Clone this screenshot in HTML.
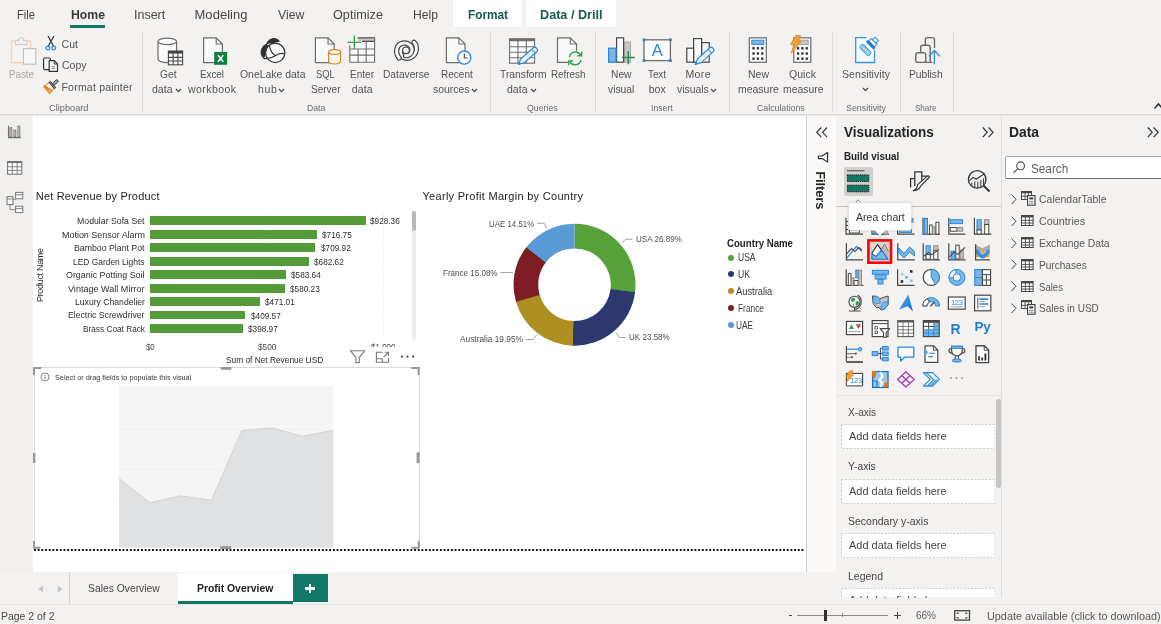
<!DOCTYPE html>
<html lang="en"><head><meta charset="utf-8"><title>Power BI Desktop</title>
<style>
html,body{margin:0;padding:0;}
body{background:#f3f2f1;width:1161px;height:624px;overflow:hidden;font-family:"Liberation Sans",sans-serif;}
#app{will-change:transform;position:relative;width:1161px;height:624px;overflow:hidden;background:#f3f2f1;}
#app>div,#app>span,#app>svg{position:absolute;}
.t{white-space:nowrap;line-height:1;display:block;}
svg{overflow:visible;}
.m{display:inline-block;width:0;height:0;}

</style></head>
<body>
<div id="app">
<div style="left:453px;top:0px;width:68.75px;height:27px;background:#fff;"></div>
<div style="left:525.75px;top:0px;width:90.5px;height:27px;background:#fff;"></div>
<div style="left:0px;top:114px;width:1161px;height:1px;background:#dddbd9;"></div>
<div style="left:0px;top:115px;width:1161px;height:1px;background:#e9e8e6;"></div>
<div style="left:0px;top:116px;width:32.5px;height:456px;background:#f1f0ef;"></div>
<div style="left:32.5px;top:116px;width:773.5px;height:456px;background:#fff;"></div>
<div style="left:806px;top:116px;width:1px;height:456px;background:#d2d0ce;"></div>
<div style="left:807px;top:116px;width:29px;height:456px;background:#faf9f8;"></div>
<div style="left:836px;top:116px;width:165.5px;height:482px;background:#f3f2f1;"></div>
<div style="left:1001px;top:116px;width:1px;height:482px;background:#e1dfdd;"></div>
<div style="left:0px;top:572px;width:836px;height:32px;background:#f3f2f1;"></div>
<div style="left:0px;top:604px;width:1161px;height:1px;background:#e6e4e2;"></div>
<span class="t" style="left:17.00px;top:8.25px;font-size:13px;color:#484644;transform:scaleX(0.8591);transform-origin:0 0;">File</span>
<span class="t" style="left:133.75px;top:8.25px;font-size:13px;color:#484644;transform:scaleX(0.9611);transform-origin:0 0;">Insert</span>
<span class="t" style="left:194.50px;top:8.25px;font-size:13px;color:#484644;letter-spacing:0.033px;">Modeling</span>
<span class="t" style="left:277.50px;top:8.25px;font-size:13px;color:#484644;transform:scaleX(0.9391);transform-origin:0 0;">View</span>
<span class="t" style="left:333.00px;top:8.25px;font-size:13px;color:#484644;transform:scaleX(0.9747);transform-origin:0 0;">Optimize</span>
<span class="t" style="left:413.00px;top:8.25px;font-size:13px;color:#484644;transform:scaleX(0.9346);transform-origin:0 0;">Help</span>
<span class="t" style="left:70.50px;top:8.25px;font-size:13px;color:#3b3a39;font-weight:700;transform:scaleX(0.9412);transform-origin:0 0;">Home</span>
<div style="left:70px;top:24.5px;width:35px;height:3px;background:#117865;"></div>
<span class="t" style="left:467.50px;top:8.25px;font-size:13px;color:#155a4e;font-weight:700;transform:scaleX(0.9078);transform-origin:0 0;">Format</span>
<span class="t" style="left:540.00px;top:8.25px;font-size:13px;color:#155a4e;font-weight:700;transform:scaleX(0.9721);transform-origin:0 0;">Data / Drill</span>
<div style="left:141.5px;top:32px;width:1px;height:80px;background:#dcdad8;"></div>
<div style="left:489.5px;top:32px;width:1px;height:80px;background:#dcdad8;"></div>
<div style="left:594.5px;top:32px;width:1px;height:80px;background:#dcdad8;"></div>
<div style="left:728.5px;top:32px;width:1px;height:80px;background:#dcdad8;"></div>
<div style="left:832px;top:32px;width:1px;height:80px;background:#dcdad8;"></div>
<div style="left:899.5px;top:32px;width:1px;height:80px;background:#dcdad8;"></div>
<div style="left:952.5px;top:32px;width:1px;height:80px;background:#dcdad8;"></div>
<span class="t" style="left:9.00px;top:69.25px;font-size:10.5px;color:#a9a7a5;transform:scaleX(0.9308);transform-origin:0 0;">Paste</span>
<span class="t" style="left:61.50px;top:39.25px;font-size:10.5px;color:#555352;letter-spacing:0.078px;">Cut</span>
<span class="t" style="left:61.50px;top:60.25px;font-size:10.5px;color:#555352;transform:scaleX(0.9994);transform-origin:0 0;">Copy</span>
<span class="t" style="left:61.50px;top:82.25px;font-size:10.5px;color:#555352;letter-spacing:0.209px;">Format painter</span>
<span class="t" style="left:159.50px;top:69.25px;font-size:10.5px;color:#555352;transform:scaleX(0.9742);transform-origin:0 0;">Get</span>
<span class="t" style="left:152.00px;top:84.25px;font-size:10.5px;color:#555352;letter-spacing:0.021px;">data</span>
<span class="t" style="left:200.00px;top:69.25px;font-size:10.5px;color:#555352;transform:scaleX(0.9343);transform-origin:0 0;">Excel</span>
<span class="t" style="left:188.00px;top:84.25px;font-size:10.5px;color:#555352;letter-spacing:0.435px;">workbook</span>
<span class="t" style="left:239.50px;top:69.25px;font-size:10.5px;color:#555352;transform:scaleX(0.9929);transform-origin:0 0;">OneLake data</span>
<span class="t" style="left:258.00px;top:84.25px;font-size:10.5px;color:#555352;letter-spacing:0.609px;">hub</span>
<span class="t" style="left:315.75px;top:69.25px;font-size:10.5px;color:#555352;transform:scaleX(0.8922);transform-origin:0 0;">SQL</span>
<span class="t" style="left:310.50px;top:84.25px;font-size:10.5px;color:#555352;transform:scaleX(0.9535);transform-origin:0 0;">Server</span>
<span class="t" style="left:350.00px;top:69.25px;font-size:10.5px;color:#555352;transform:scaleX(0.9558);transform-origin:0 0;">Enter</span>
<span class="t" style="left:351.75px;top:84.25px;font-size:10.5px;color:#555352;letter-spacing:0.104px;">data</span>
<span class="t" style="left:382.50px;top:69.25px;font-size:10.5px;color:#555352;transform:scaleX(0.9716);transform-origin:0 0;">Dataverse</span>
<span class="t" style="left:440.75px;top:69.25px;font-size:10.5px;color:#555352;transform:scaleX(0.9540);transform-origin:0 0;">Recent</span>
<span class="t" style="left:433.00px;top:84.25px;font-size:10.5px;color:#555352;transform:scaleX(0.9928);transform-origin:0 0;">sources</span>
<span class="t" style="left:499.50px;top:69.25px;font-size:10.5px;color:#555352;transform:scaleX(0.9799);transform-origin:0 0;">Transform</span>
<span class="t" style="left:507.00px;top:84.25px;font-size:10.5px;color:#555352;letter-spacing:0.021px;">data</span>
<span class="t" style="left:550.50px;top:69.25px;font-size:10.5px;color:#555352;transform:scaleX(0.9384);transform-origin:0 0;">Refresh</span>
<span class="t" style="left:610.50px;top:69.25px;font-size:10.5px;color:#555352;transform:scaleX(0.9755);transform-origin:0 0;">New</span>
<span class="t" style="left:607.50px;top:84.25px;font-size:10.5px;color:#555352;transform:scaleX(0.9773);transform-origin:0 0;">visual</span>
<span class="t" style="left:648.00px;top:69.25px;font-size:10.5px;color:#555352;transform:scaleX(0.9343);transform-origin:0 0;">Text</span>
<span class="t" style="left:648.75px;top:84.25px;font-size:10.5px;color:#555352;letter-spacing:0.031px;">box</span>
<span class="t" style="left:685.50px;top:69.25px;font-size:10.5px;color:#555352;letter-spacing:0.354px;">More</span>
<span class="t" style="left:677.00px;top:84.25px;font-size:10.5px;color:#555352;transform:scaleX(0.9888);transform-origin:0 0;">visuals</span>
<span class="t" style="left:748.00px;top:69.25px;font-size:10.5px;color:#555352;transform:scaleX(0.9993);transform-origin:0 0;">New</span>
<span class="t" style="left:738.00px;top:84.25px;font-size:10.5px;color:#555352;transform:scaleX(0.9973);transform-origin:0 0;">measure</span>
<span class="t" style="left:789.00px;top:69.25px;font-size:10.5px;color:#555352;letter-spacing:0.039px;">Quick</span>
<span class="t" style="left:782.50px;top:84.25px;font-size:10.5px;color:#555352;transform:scaleX(0.9912);transform-origin:0 0;">measure</span>
<span class="t" style="left:842.00px;top:69.25px;font-size:10.5px;color:#555352;letter-spacing:0.073px;">Sensitivity</span>
<span class="t" style="left:908.75px;top:69.25px;font-size:10.5px;color:#555352;transform:scaleX(0.9796);transform-origin:0 0;">Publish</span>
<svg style="left:175.75px;top:89px" width="5" height="3.6"><polyline points="0,0 2.5,2.6 5,0" fill="none" stroke="#4a4846" stroke-width="1.2"/></svg>
<svg style="left:278.5px;top:89px" width="5" height="3.6"><polyline points="0,0 2.5,2.6 5,0" fill="none" stroke="#4a4846" stroke-width="1.2"/></svg>
<svg style="left:472.2px;top:89px" width="5" height="3.6"><polyline points="0,0 2.5,2.6 5,0" fill="none" stroke="#4a4846" stroke-width="1.2"/></svg>
<svg style="left:530.75px;top:89px" width="5" height="3.6"><polyline points="0,0 2.5,2.6 5,0" fill="none" stroke="#4a4846" stroke-width="1.2"/></svg>
<svg style="left:711.25px;top:89px" width="5" height="3.6"><polyline points="0,0 2.5,2.6 5,0" fill="none" stroke="#4a4846" stroke-width="1.2"/></svg>
<svg style="left:862.7px;top:88px" width="5" height="3.6"><polyline points="0,0 2.5,2.6 5,0" fill="none" stroke="#4a4846" stroke-width="1.2"/></svg>
<span class="t" style="left:49.00px;top:103.25px;font-size:9.8px;color:#6b6968;transform:scaleX(0.9419);transform-origin:0 0;">Clipboard</span>
<span class="t" style="left:306.75px;top:103.25px;font-size:9.8px;color:#6b6968;transform:scaleX(0.8815);transform-origin:0 0;">Data</span>
<span class="t" style="left:526.75px;top:103.25px;font-size:9.8px;color:#6b6968;transform:scaleX(0.8962);transform-origin:0 0;">Queries</span>
<span class="t" style="left:650.75px;top:103.25px;font-size:9.8px;color:#6b6968;transform:scaleX(0.8872);transform-origin:0 0;">Insert</span>
<span class="t" style="left:756.75px;top:103.25px;font-size:9.8px;color:#6b6968;transform:scaleX(0.8946);transform-origin:0 0;">Calculations</span>
<span class="t" style="left:845.75px;top:103.25px;font-size:9.8px;color:#6b6968;transform:scaleX(0.9068);transform-origin:0 0;">Sensitivity</span>
<span class="t" style="left:914.50px;top:103.25px;font-size:9.8px;color:#6b6968;transform:scaleX(0.8220);transform-origin:0 0;">Share</span>
<svg style="left:1153.5px;top:103px" width="8" height="7"><polyline points="0.5,5.5 4.5,1 8.5,5.5" fill="none" stroke="#323130" stroke-width="1.5"/></svg>
<span class="t" style="left:35.75px;top:191.25px;font-size:11px;color:#252423;letter-spacing:0.185px;">Net Revenue by Product</span>
<svg style="left:0;top:0" width="1161" height="624"><line x1="266.6" y1="212" x2="266.6" y2="340" stroke="#ececec" stroke-width="1" stroke-dasharray="1,2"/><line x1="383.3" y1="212" x2="383.3" y2="340" stroke="#e4e4e4" stroke-width="1" stroke-dasharray="1,2"/></svg>
<div style="left:150px;top:216.3px;width:216.22px;height:8.9px;background:#539a39;"></div>
<span class="t" style="left:77.00px;top:217.25px;font-size:9px;color:#2f2e2d;transform:scaleX(0.9706);transform-origin:0 0;">Modular Sofa Set</span>
<span class="t" style="left:369.52px;top:217.25px;font-size:9px;color:#2f2e2d;transform:scaleX(0.9141);transform-origin:0 0;">$928.36</span>
<div style="left:150px;top:229.77px;width:166.93px;height:8.9px;background:#539a39;"></div>
<span class="t" style="left:61.50px;top:231.25px;font-size:9px;color:#2f2e2d;transform:scaleX(0.9935);transform-origin:0 0;">Motion Sensor Alarm</span>
<span class="t" style="left:322.23px;top:231.25px;font-size:9px;color:#2f2e2d;transform:scaleX(0.9141);transform-origin:0 0;">$716.75</span>
<div style="left:150px;top:243.24px;width:165.34px;height:8.9px;background:#539a39;"></div>
<span class="t" style="left:74.00px;top:244.25px;font-size:9px;color:#2f2e2d;transform:scaleX(0.9718);transform-origin:0 0;">Bamboo Plant Pot</span>
<span class="t" style="left:320.64px;top:244.25px;font-size:9px;color:#2f2e2d;transform:scaleX(0.9141);transform-origin:0 0;">$709.92</span>
<div style="left:150px;top:256.71px;width:158.98px;height:8.9px;background:#539a39;"></div>
<span class="t" style="left:73.00px;top:258.25px;font-size:9px;color:#2f2e2d;transform:scaleX(0.9341);transform-origin:0 0;">LED Garden Lights</span>
<span class="t" style="left:314.28px;top:258.25px;font-size:9px;color:#2f2e2d;transform:scaleX(0.9141);transform-origin:0 0;">$682.62</span>
<div style="left:150px;top:270.18px;width:135.93px;height:8.9px;background:#539a39;"></div>
<span class="t" style="left:66.00px;top:271.25px;font-size:9px;color:#2f2e2d;transform:scaleX(0.9868);transform-origin:0 0;">Organic Potting Soil</span>
<span class="t" style="left:291.23px;top:271.25px;font-size:9px;color:#2f2e2d;transform:scaleX(0.9141);transform-origin:0 0;">$583.64</span>
<div style="left:150px;top:283.65px;width:135.14px;height:8.9px;background:#539a39;"></div>
<span class="t" style="left:68.00px;top:285.25px;font-size:9px;color:#2f2e2d;letter-spacing:0.026px;">Vintage Wall Mirror</span>
<span class="t" style="left:290.44px;top:285.25px;font-size:9px;color:#2f2e2d;transform:scaleX(0.9141);transform-origin:0 0;">$580.23</span>
<div style="left:150px;top:297.12px;width:109.7px;height:8.9px;background:#539a39;"></div>
<span class="t" style="left:74.50px;top:298.25px;font-size:9px;color:#2f2e2d;transform:scaleX(0.9583);transform-origin:0 0;">Luxury Chandelier</span>
<span class="t" style="left:265.00px;top:298.25px;font-size:9px;color:#2f2e2d;transform:scaleX(0.9141);transform-origin:0 0;">$471.01</span>
<div style="left:150px;top:310.59px;width:95.39px;height:8.9px;background:#539a39;"></div>
<span class="t" style="left:68.00px;top:311.25px;font-size:9px;color:#2f2e2d;transform:scaleX(0.9621);transform-origin:0 0;">Electric Screwdriver</span>
<span class="t" style="left:250.69px;top:312.25px;font-size:9px;color:#2f2e2d;transform:scaleX(0.9141);transform-origin:0 0;">$409.57</span>
<div style="left:150px;top:324.06px;width:92.92px;height:8.9px;background:#539a39;"></div>
<span class="t" style="left:82.50px;top:325.25px;font-size:9px;color:#2f2e2d;transform:scaleX(0.9181);transform-origin:0 0;">Brass Coat Rack</span>
<span class="t" style="left:248.22px;top:325.25px;font-size:9px;color:#2f2e2d;transform:scaleX(0.9141);transform-origin:0 0;">$398.97</span>
<span class="t" style="left:146.25px;top:343.25px;font-size:9px;color:#4a4846;transform:scaleX(0.8736);transform-origin:0 0;">$0</span>
<span class="t" style="left:257.80px;top:343.25px;font-size:9px;color:#4a4846;transform:scaleX(0.9186);transform-origin:0 0;">$500</span>
<span class="t" style="left:371.00px;top:343.25px;font-size:9px;color:#4a4846;transform:scaleX(0.8899);transform-origin:0 0;">$1,000</span>
<span class="t" style="left:225.80px;top:356.25px;font-size:9px;color:#2b2a29;transform:scaleX(0.9253);transform-origin:0 0;">Sum of Net Revenue USD</span>
<span class="t" style="left:0.00px;top:0.00px;font-size:9px;color:#2b2a29;letter-spacing:-0.321px;transform-origin:0 0;transform:translate(35.6px,302px) rotate(-90deg);">Product Name</span>
<div style="left:412.3px;top:211px;width:4px;height:128.5px;background:#ededed;border-radius:2px;"></div>
<div style="left:412.3px;top:211px;width:4px;height:19.5px;background:#b9b9b9;border-radius:2px;"></div>
<div style="left:345px;top:346.6px;width:74px;height:20px;background:#fff;"></div>
<span class="t" style="left:422.50px;top:191.25px;font-size:11px;color:#252423;letter-spacing:0.289px;">Yearly Profit Margin by Country</span>
<svg style="left:0;top:0" width="1161" height="624"><path d="M574.50,223.70 A61,61 0 0 1 635.03,292.24 L610.52,289.19 A36.3,36.3 0 0 0 574.50,248.40 Z" fill="#57a23a"/><path d="M635.07,291.93 A61,61 0 0 1 572.38,345.66 L573.24,320.98 A36.3,36.3 0 0 0 610.54,289.00 Z" fill="#2d386f"/><path d="M572.70,345.67 A61,61 0 0 1 515.92,301.71 L539.64,294.82 A36.3,36.3 0 0 0 573.43,320.98 Z" fill="#ae8f21"/><path d="M516.01,302.01 A61,61 0 0 1 526.50,247.06 L545.93,262.30 A36.3,36.3 0 0 0 539.69,295.00 Z" fill="#7c1c25"/><path d="M526.30,247.31 A61,61 0 0 1 574.50,223.70 L574.50,248.40 A36.3,36.3 0 0 0 545.82,262.45 Z" fill="#5b9bd5"/><g fill="none" stroke="#a6a6a6" stroke-width="1"><polyline points="622,243 625.5,239.3 632.5,239.3"/><polyline points="615.8,332.5 619.3,337.5 625.5,337.5"/><polyline points="537,334.3 533.3,339.5 526.3,339.5"/><polyline points="513,272.5 500.5,272.5"/><polyline points="546.8,228.3 544.3,223.3 537,223.3"/></g></svg>
<span class="t" style="left:635.75px;top:235.25px;font-size:9px;color:#4f4d4c;transform:scaleX(0.9011);transform-origin:0 0;">USA 26.89%</span>
<span class="t" style="left:629.25px;top:333.25px;font-size:9px;color:#4f4d4c;transform:scaleX(0.8950);transform-origin:0 0;">UK 23.58%</span>
<span class="t" style="left:460.00px;top:335.25px;font-size:9px;color:#4f4d4c;transform:scaleX(0.9258);transform-origin:0 0;">Australia 19.95%</span>
<span class="t" style="left:442.50px;top:269.25px;font-size:9px;color:#4f4d4c;transform:scaleX(0.8928);transform-origin:0 0;">France 15.08%</span>
<span class="t" style="left:489.25px;top:220.25px;font-size:9px;color:#4f4d4c;transform:scaleX(0.8781);transform-origin:0 0;">UAE 14.51%</span>
<span class="t" style="left:727.00px;top:239.25px;font-size:10px;color:#1f1e1d;font-weight:700;transform:scaleX(0.9655);transform-origin:0 0;">Country Name</span>
<div style="left:727.8px;top:254.5px;width:6px;height:6px;background:#57a23a;border-radius:50%;"></div>
<span class="t" style="left:738.00px;top:253.25px;font-size:10px;color:#3a3938;transform:scaleX(0.8511);transform-origin:0 0;">USA</span>
<div style="left:727.8px;top:271.4px;width:6px;height:6px;background:#2d386f;border-radius:50%;"></div>
<span class="t" style="left:738.00px;top:270.25px;font-size:10px;color:#3a3938;transform:scaleX(0.8629);transform-origin:0 0;">UK</span>
<div style="left:727.8px;top:288.3px;width:6px;height:6px;background:#ae8f21;border-radius:50%;"></div>
<span class="t" style="left:735.50px;top:287.25px;font-size:10px;color:#3a3938;transform:scaleX(0.9317);transform-origin:0 0;">Australia</span>
<div style="left:727.8px;top:305.2px;width:6px;height:6px;background:#7c1c25;border-radius:50%;"></div>
<span class="t" style="left:738.00px;top:304.25px;font-size:10px;color:#3a3938;transform:scaleX(0.8353);transform-origin:0 0;">France</span>
<div style="left:727.8px;top:322.1px;width:6px;height:6px;background:#5b9bd5;border-radius:50%;"></div>
<span class="t" style="left:735.50px;top:321.25px;font-size:10px;color:#3a3938;transform:scaleX(0.8267);transform-origin:0 0;">UAE</span>
<div style="left:33.5px;top:367.3px;width:386px;height:1px;background:#d9d9d9;"></div>
<div style="left:33.5px;top:367.3px;width:1px;height:181px;background:#d9d9d9;"></div>
<div style="left:418.8px;top:367.3px;width:1px;height:181px;background:#d9d9d9;"></div>
<svg style="left:0;top:0" width="1161" height="624">
<rect x="119.2" y="386.3" width="214.1" height="161.3" fill="#f4f4f4"/>
<rect x="119.2" y="425.8" width="214.1" height="1" fill="#fafafa"/><rect x="119.2" y="465.8" width="214.1" height="1" fill="#fafafa"/>
<polygon points="119.2,478.5 149.6,502.7 180.3,495.9 211.5,500.3 241.8,430.4 272.3,428 302.8,436.4 333.3,430.3 333.3,547.6 119.2,547.6" fill="#e0e1e3"/>
<polyline points="119.2,478.5 149.6,502.7 180.3,495.9 211.5,500.3 241.8,430.4 272.3,428 302.8,436.4 333.3,430.3" fill="none" stroke="#d2d3d5" stroke-width="1"/>
<g fill="none" stroke="#979797" stroke-width="2">
<polyline points="34,375 34,368 41.3,368"/><polyline points="411.3,368 418.7,368 418.7,375"/>
<polyline points="34,541 34,547.7 40.5,547.7"/><polyline points="411.5,547.7 418.7,547.7 418.7,541"/>
</g>
<g fill="#979797"><rect x="220.8" y="367" width="10.5" height="2.8"/><rect x="220.2" y="546.2" width="11" height="2.8"/><rect x="33" y="453" width="2.4" height="10"/><rect x="416.6" y="452.4" width="3" height="10.8"/></g>
<circle cx="45" cy="377" r="4" fill="none" stroke="#605e5c" stroke-width="0.8"/><rect x="44.6" y="375" width="0.9" height="0.9" fill="#605e5c"/><rect x="44.6" y="376.5" width="0.9" height="2.6" fill="#605e5c"/>
</svg>
<span class="t" style="left:55.00px;top:374.25px;font-size:7.6px;color:#3a3938;transform:scaleX(0.9577);transform-origin:0 0;">Select or drag fields to populate this visual</span>
<svg style="left:0;top:0" width="1161" height="624"><line x1="34" y1="550" x2="805" y2="550" stroke="#0a0a0a" stroke-width="2" stroke-dasharray="1.85,1.84"/></svg>
<span class="t" style="left:0.00px;top:0.00px;font-size:13px;color:#252423;font-weight:700;letter-spacing:-0.136px;transform-origin:0 0;transform:translate(826.6px,171.3px) rotate(90deg);">Filters</span>
<svg style="left:815.8px;top:126.5px" width="12" height="11"><polyline points="5.2,0.5 0.8,5.3 5.2,10.1" fill="none" stroke="#323130" stroke-width="1.2"/><polyline points="11,0.5 6.6,5.3 11,10.1" fill="none" stroke="#323130" stroke-width="1.2"/></svg>
<span class="t" style="left:844.00px;top:125.25px;font-size:14.5px;color:#252423;font-weight:700;transform:scaleX(0.9307);transform-origin:0 0;">Visualizations</span>
<svg style="left:982px;top:126.5px" width="12" height="11"><polyline points="0.8,0.5 5.2,5.3 0.8,10.1" fill="none" stroke="#323130" stroke-width="1.2"/><polyline points="6.6,0.5 11,5.3 6.6,10.1" fill="none" stroke="#323130" stroke-width="1.2"/></svg>
<svg style="left:1147px;top:126.5px" width="12" height="11"><polyline points="0.8,0.5 5.2,5.3 0.8,10.1" fill="none" stroke="#323130" stroke-width="1.2"/><polyline points="6.6,0.5 11,5.3 6.6,10.1" fill="none" stroke="#323130" stroke-width="1.2"/></svg>
<span class="t" style="left:844.25px;top:151.25px;font-size:10.5px;color:#252423;font-weight:700;transform:scaleX(0.9374);transform-origin:0 0;">Build visual</span>
<div style="left:843.6px;top:166.5px;width:29px;height:29px;background:#d2d0ce;border-radius:2px;"></div>
<div style="left:836px;top:206.4px;width:165px;height:1px;background:#c8c6c4;"></div>
<div style="left:836px;top:395px;width:165px;height:1px;background:#e6e4e2;"></div>
<span class="t" style="left:847.60px;top:407.25px;font-size:11px;color:#484644;transform:scaleX(0.9227);transform-origin:0 0;">X-axis</span>
<svg style="left:840.6px;top:424.2px;overflow:hidden" width="154.4" height="25"><rect x="0.5" y="0.5" width="153.4" height="24" fill="#fff" stroke="#cfcdcb" stroke-width="1" stroke-dasharray="2,1.6"/></svg>
<span class="t" style="left:849.40px;top:431.25px;font-size:11.3px;color:#484644;transform:scaleX(0.9711);transform-origin:0 0;">Add data fields here</span>
<span class="t" style="left:847.60px;top:461.25px;font-size:11px;color:#484644;transform:scaleX(0.9404);transform-origin:0 0;">Y-axis</span>
<svg style="left:840.6px;top:478.8px;overflow:hidden" width="154.4" height="25"><rect x="0.5" y="0.5" width="153.4" height="24" fill="#fff" stroke="#cfcdcb" stroke-width="1" stroke-dasharray="2,1.6"/></svg>
<span class="t" style="left:849.40px;top:486.25px;font-size:11.3px;color:#484644;transform:scaleX(0.9711);transform-origin:0 0;">Add data fields here</span>
<span class="t" style="left:847.60px;top:516.25px;font-size:11px;color:#484644;transform:scaleX(0.9529);transform-origin:0 0;">Secondary y-axis</span>
<svg style="left:840.6px;top:533.4px;overflow:hidden" width="154.4" height="25"><rect x="0.5" y="0.5" width="153.4" height="24" fill="#fff" stroke="#cfcdcb" stroke-width="1" stroke-dasharray="2,1.6"/></svg>
<span class="t" style="left:849.40px;top:540.25px;font-size:11.3px;color:#484644;transform:scaleX(0.9711);transform-origin:0 0;">Add data fields here</span>
<span class="t" style="left:847.60px;top:571.25px;font-size:11px;color:#484644;transform:scaleX(0.9532);transform-origin:0 0;">Legend</span>
<svg style="left:840.6px;top:588.0px;overflow:hidden" width="154.4" height="8.6"><rect x="0.5" y="0.5" width="153.4" height="11" fill="#fff" stroke="#cfcdcb" stroke-width="1" stroke-dasharray="2,1.6"/></svg>
<span class="t" style="left:849.40px;top:595.25px;font-size:11.3px;color:#484644;transform:scaleX(0.9711);transform-origin:0 0;clip-path:inset(0 0 7.6px 0);">Add data fields here</span>
<div style="left:995.5px;top:398.8px;width:5px;height:89.5px;background:#c8c6c4;border-radius:2.5px;"></div>
<div style="left:836px;top:597.5px;width:325px;height:6.5px;background:#f3f2f1;"></div>
<span class="t" style="left:1009.25px;top:125.25px;font-size:14.5px;color:#252423;font-weight:700;transform:scaleX(0.9543);transform-origin:0 0;">Data</span>
<div style="left:1005.2px;top:155.8px;width:160px;height:23.2px;background:#fff;box-sizing:border-box;border:1px solid #a6a4a2;border-bottom-color:#6e6c6a;border-radius:2px;"></div>
<svg style="left:1012.5px;top:161px" width="13" height="13"><circle cx="7.6" cy="4.8" r="3.9" fill="none" stroke="#484644" stroke-width="1.1"/><line x1="4.8" y1="7.7" x2="0.6" y2="11.9" stroke="#484644" stroke-width="1.1"/></svg>
<span class="t" style="left:1031.30px;top:162.25px;font-size:13px;color:#605e5c;transform:scaleX(0.9028);transform-origin:0 0;">Search</span>
<span class="t" style="left:1039.00px;top:194.25px;font-size:11.3px;color:#5a5856;transform:scaleX(0.9264);transform-origin:0 0;">CalendarTable</span>
<svg style="left:1010.7px;top:193.7px" width="6" height="11"><polyline points="0.6,0.6 5,5.3 0.6,10" fill="none" stroke="#484644" stroke-width="1"/></svg>
<svg style="left:1020.5px;top:190.8px" width="15" height="15"><rect x="0.5" y="0.5" width="10" height="8" fill="#fff" stroke="#484644" stroke-width="1"/><rect x="0.5" y="0.5" width="10" height="1.7" fill="#484644"/><path d="M0.5,5.3H10.5M4,0.5V8.5M7.4,0.5V8.5" stroke="#484644" stroke-width="0.9" fill="none"/><rect x="6.6" y="4.6" width="7.4" height="9.6" fill="#fff" stroke="#3b3a39" stroke-width="1.1"/><rect x="8.3" y="6.4" width="4" height="2" fill="#3b3a39"/><path d="M8.3,10.3h4M8.3,12.2h4" stroke="#3b3a39" stroke-width="0.9" stroke-dasharray="1,0.5"/></svg>
<span class="t" style="left:1039.00px;top:216.25px;font-size:11.3px;color:#5a5856;transform:scaleX(0.9553);transform-origin:0 0;">Countries</span>
<svg style="left:1010.7px;top:215.6px" width="6" height="11"><polyline points="0.6,0.6 5,5.3 0.6,10" fill="none" stroke="#484644" stroke-width="1"/></svg>
<svg style="left:1021px;top:215.4px" width="13" height="11"><rect x="0.5" y="0.5" width="11.6" height="10" fill="#fff" stroke="#484644" stroke-width="1"/><rect x="0.5" y="0.5" width="11.6" height="1.9" fill="#484644"/><path d="M0.5,5.4H12.1M0.5,8H12.1M4.4,0.5V10.5M8.3,0.5V10.5" stroke="#484644" stroke-width="0.9" fill="none"/></svg>
<span class="t" style="left:1039.00px;top:238.25px;font-size:11.3px;color:#5a5856;transform:scaleX(0.9139);transform-origin:0 0;">Exchange Data</span>
<svg style="left:1010.7px;top:237.5px" width="6" height="11"><polyline points="0.6,0.6 5,5.3 0.6,10" fill="none" stroke="#484644" stroke-width="1"/></svg>
<svg style="left:1021px;top:237.3px" width="13" height="11"><rect x="0.5" y="0.5" width="11.6" height="10" fill="#fff" stroke="#484644" stroke-width="1"/><rect x="0.5" y="0.5" width="11.6" height="1.9" fill="#484644"/><path d="M0.5,5.4H12.1M0.5,8H12.1M4.4,0.5V10.5M8.3,0.5V10.5" stroke="#484644" stroke-width="0.9" fill="none"/></svg>
<span class="t" style="left:1039.00px;top:260.25px;font-size:11.3px;color:#5a5856;transform:scaleX(0.8937);transform-origin:0 0;">Purchases</span>
<svg style="left:1010.7px;top:259.4px" width="6" height="11"><polyline points="0.6,0.6 5,5.3 0.6,10" fill="none" stroke="#484644" stroke-width="1"/></svg>
<svg style="left:1021px;top:259.2px" width="13" height="11"><rect x="0.5" y="0.5" width="11.6" height="10" fill="#fff" stroke="#484644" stroke-width="1"/><rect x="0.5" y="0.5" width="11.6" height="1.9" fill="#484644"/><path d="M0.5,5.4H12.1M0.5,8H12.1M4.4,0.5V10.5M8.3,0.5V10.5" stroke="#484644" stroke-width="0.9" fill="none"/></svg>
<span class="t" style="left:1039.00px;top:282.25px;font-size:11.3px;color:#5a5856;transform:scaleX(0.8491);transform-origin:0 0;">Sales</span>
<svg style="left:1010.7px;top:281.3px" width="6" height="11"><polyline points="0.6,0.6 5,5.3 0.6,10" fill="none" stroke="#484644" stroke-width="1"/></svg>
<svg style="left:1021px;top:281.1px" width="13" height="11"><rect x="0.5" y="0.5" width="11.6" height="10" fill="#fff" stroke="#484644" stroke-width="1"/><rect x="0.5" y="0.5" width="11.6" height="1.9" fill="#484644"/><path d="M0.5,5.4H12.1M0.5,8H12.1M4.4,0.5V10.5M8.3,0.5V10.5" stroke="#484644" stroke-width="0.9" fill="none"/></svg>
<span class="t" style="left:1039.00px;top:303.25px;font-size:11.3px;color:#5a5856;transform:scaleX(0.8915);transform-origin:0 0;">Sales in USD</span>
<svg style="left:1010.7px;top:303.2px" width="6" height="11"><polyline points="0.6,0.6 5,5.3 0.6,10" fill="none" stroke="#484644" stroke-width="1"/></svg>
<svg style="left:1020.5px;top:300.3px" width="15" height="15"><rect x="0.5" y="0.5" width="10" height="8" fill="#fff" stroke="#484644" stroke-width="1"/><rect x="0.5" y="0.5" width="10" height="1.7" fill="#484644"/><path d="M0.5,5.3H10.5M4,0.5V8.5M7.4,0.5V8.5" stroke="#484644" stroke-width="0.9" fill="none"/><rect x="6.6" y="4.6" width="7.4" height="9.6" fill="#fff" stroke="#3b3a39" stroke-width="1.1"/><rect x="8.3" y="6.4" width="4" height="2" fill="#3b3a39"/><path d="M8.3,10.3h4M8.3,12.2h4" stroke="#3b3a39" stroke-width="0.9" stroke-dasharray="1,0.5"/></svg>
<div style="left:68.5px;top:572px;width:1px;height:32px;background:#d2d0ce;"></div>
<svg style="left:37.5px;top:584.5px" width="26" height="9"><polygon points="0,4 5,0.4 5,7.6" fill="#c8c6c4"/><polygon points="24.3,4 19.8,0.4 19.8,7.6" fill="#c8c6c4"/></svg>
<span class="t" style="left:87.50px;top:583.25px;font-size:11.4px;color:#484644;transform:scaleX(0.9066);transform-origin:0 0;">Sales Overview</span>
<div style="left:178px;top:572.5px;width:114.5px;height:31.7px;background:#fff;"></div>
<div style="left:178px;top:600.6px;width:114.5px;height:3.6px;background:#117865;"></div>
<span class="t" style="left:197.00px;top:583.25px;font-size:11.4px;color:#252423;font-weight:700;transform:scaleX(0.9125);transform-origin:0 0;">Profit Overview</span>
<div style="left:292.5px;top:573.7px;width:35.5px;height:28.6px;background:#117865;"></div>
<div style="left:305.3px;top:587.3px;width:9.6px;height:2.3px;background:#fff;"></div>
<div style="left:308.95px;top:583.65px;width:2.3px;height:9.6px;background:#fff;"></div>
<span class="t" style="left:0.75px;top:611.25px;font-size:11px;color:#484644;transform:scaleX(0.9506);transform-origin:0 0;">Page 2 of 2</span>
<span class="t" style="left:916.40px;top:610.25px;font-size:10.5px;color:#605e5c;transform:scaleX(0.9517);transform-origin:0 0;">66%</span>
<span class="t" style="left:986.60px;top:611.25px;font-size:11px;color:#5a5856;transform:scaleX(0.9858);transform-origin:0 0;">Update available (click to download)</span>
<div style="left:797px;top:614.8px;width:91.2px;height:1px;background:#8a8886;"></div>
<div style="left:824.2px;top:610.3px;width:2.4px;height:10.3px;background:#323130;"></div>
<div style="left:842px;top:613.3px;width:1px;height:4px;background:#8a8886;"></div>
<div style="left:788.8px;top:615px;width:3.2px;height:1.1px;background:#484644;"></div>
<div style="left:893.8px;top:614.7px;width:7.2px;height:1.3px;background:#484644;"></div>
<div style="left:896.75px;top:611.7px;width:1.3px;height:7.2px;background:#484644;"></div>
<svg style="left:954px;top:610px" width="17" height="11"><rect x="0.7" y="0.7" width="14.8" height="9.4" fill="none" stroke="#484644" stroke-width="1.3"/><path d="M3,4V3H5M11,3h2v1M13,7v1h-2M5,8H3V7" fill="none" stroke="#484644" stroke-width="1"/></svg>
<svg style="left:0;top:0" width="1161" height="120"><rect x="11.6" y="41" width="19" height="21.6" fill="#f6f5f4" stroke="#f3d3b0" stroke-width="1.3"/><path d="M15.4,44.6 V40.4 H18.8 a2.4,2.6 0 0 1 4.8,0 H26.8 V44.6 Z" fill="#f3f2f1" stroke="#cfcdcb" stroke-width="1.1"/><rect x="23.4" y="48.6" width="12.4" height="15.6" fill="#f7f7f7" stroke="#c6c4c2" stroke-width="1.2"/><path d="M48,36 L53.6,46.2 M53.9,36 L48.2,46.2" stroke="#323130" stroke-width="1.2" fill="none"/><circle cx="47.9" cy="48" r="1.9" fill="#cfe4f7" stroke="#2b88d8" stroke-width="1.2"/><circle cx="53.8" cy="48" r="1.9" fill="#cfe4f7" stroke="#2b88d8" stroke-width="1.2"/><rect x="43.6" y="58" width="6.8" height="11.6" rx="1.2" fill="#f8f8f8" stroke="#323130" stroke-width="1.2"/><path d="M49.2,60.6 H54.4 L57.5,63.8 V71.4 H49.2 Z" fill="#fafafa" stroke="#323130" stroke-width="1.2" stroke-linejoin="round"/><path d="M54.2,60.8 V64 H57.3" fill="none" stroke="#323130" stroke-width="1"/><path d="M51.6,66.6 H55.2 M51.6,68.4 H55.2" stroke="#7a7876" stroke-width="0.9"/><g transform="translate(52.4,85) rotate(-41)"><path d="M-0.8,-3.8 L-7.6,-4.7 L-7.6,4.7 L-0.8,3.8 Z" fill="#fdfdfd" stroke="#e07d1a" stroke-width="1" stroke-linejoin="round"/><path d="M-3.4,4.1 L-7.6,4.7 L-7.6,-4.7 L-5.6,-4.4 Z" fill="#e8841f"/><path d="M-6.8,1 L-6.8,3.6 L-4.4,3.3 Z" fill="#fbc978"/><rect x="-0.9" y="-4.1" width="1.8" height="8.2" fill="#8a8886" stroke="#323130" stroke-width="0.9"/><rect x="0.9" y="-1.3" width="6.2" height="2.6" rx="1.2" fill="#a9a7a5" stroke="#323130" stroke-width="0.9"/></g><path d="M158,41.4 V59.4 a9.3,3.2 0 0 0 18.6,0 V41.4" fill="#fafafa" stroke="#6e6c6a" stroke-width="1.2"/><ellipse cx="167.3" cy="41.4" rx="9.3" ry="3.2" fill="#fafafa" stroke="#6e6c6a" stroke-width="1.2"/><rect x="168.4" y="51" width="14.2" height="13.8" fill="#fdfdfd" stroke="#484644" stroke-width="1.1"/><rect x="168.4" y="51" width="14.2" height="2.6" fill="#484644"/><path d="M173.13,51V64.8M177.87,51V64.8M168.4,57.33H182.6M168.4,61.07H182.6" stroke="#484644" stroke-width="1.1" fill="none"/><path d="M203.6,37.8 H216.20000000000002 L222.4,44.0 V62.599999999999994 H203.6 Z" fill="#fafafa" stroke="#6e6c6a" stroke-width="1.2" stroke-linejoin="round"/><path d="M216.20000000000002,37.8 V44.0 H222.4" fill="none" stroke="#6e6c6a" stroke-width="1.1"/><rect x="214.2" y="52" width="12.9" height="12.8" fill="#107c41"/><path d="M218,55.2 L223.3,61.8 M223.3,55.2 L218,61.8" stroke="#fff" stroke-width="1.5"/><path d="M266.6,43.4 C262,45.6 259.6,50.4 261,54.8 C261.8,57 263,58.2 264.2,58.8 L268,45 Z" fill="#323130"/><path d="M266.2,44 C267.4,40 271.6,37.6 275.4,38.2 C277.6,38.6 279.2,39.8 280,41.6 L272,43.6 Z" fill="#323130"/><circle cx="275.2" cy="52.8" r="9.7" fill="#fafafa" stroke="#323130" stroke-width="1.25"/><path d="M269.2,45.2 Q270.6,52.6 275.4,55.8 Q280,52.2 284.6,54 M275.4,55.8 Q269.6,59.4 263.4,58.4" fill="none" stroke="#323130" stroke-width="1.1"/><path d="M315.4,37.8 H328.0 L334.2,44.0 V62.599999999999994 H315.4 Z" fill="#fafafa" stroke="#6e6c6a" stroke-width="1.2" stroke-linejoin="round"/><path d="M328.0,37.8 V44.0 H334.2" fill="none" stroke="#6e6c6a" stroke-width="1.1"/><path d="M328.6,52 V61.6 a6,2.4 0 0 0 12,0 V52" fill="#fdf7f0" stroke="#d9822b" stroke-width="1.2"/><ellipse cx="334.6" cy="52" rx="6" ry="2.4" fill="#fdf7f0" stroke="#d9822b" stroke-width="1.2"/><path d="M349.8,45.4 H357.6 V38 H374.6 V62.3 H349.8 Z" fill="#fcfcfc"/><rect x="357.8" y="38.4" width="16.6" height="2.8" fill="#c8c6c4"/><path d="M357.6,37.9 H374.6 M362,41.3 H374.6" stroke="#484644" stroke-width="1.2"/><path d="M349.8,45.4 V62.3 H374.6 V37.4 M349.8,49 H374.6 M349.8,55.1 H374.6 M358.1,49 V62.3 M366.2,41.3 V62.3" fill="none" stroke="#6e6c6a" stroke-width="1.1"/><path d="M354.4,35.5 V49 M347.5,42.4 H361.3" stroke="#3a9b50" stroke-width="1.4"/><g fill="none" stroke-linecap="round"><path d="M414,42.4 C418,46.5 417,54.5 410.5,57.6 C405.5,59.5 400.5,57 400.3,51.6 C400.2,47.5 403.5,44.8 406.8,45.2" stroke="#484644" stroke-width="5.3"/><path d="M414,42.4 C418,46.5 417,54.5 410.5,57.6 C405.5,59.5 400.5,57 400.3,51.6 C400.2,47.5 403.5,44.8 406.8,45.2" stroke="#f7f7f7" stroke-width="3"/><path d="M399.2,58 C394.5,52 396.5,43.5 404,43 C409,42.8 412.5,46.5 412,50.5 C411.6,54 408.5,56 405.5,55.6" stroke="#484644" stroke-width="5.3"/><path d="M399.2,58 C394.5,52 396.5,43.5 404,43 C409,42.8 412.5,46.5 412,50.5 C411.6,54 408.5,56 405.5,55.6" stroke="#f7f7f7" stroke-width="3"/><circle cx="406" cy="50.3" r="3.3" fill="#f7f7f7" stroke="#484644" stroke-width="1.1"/></g><path d="M446.4,37.8 H458.8 L465.0,44.0 V62.599999999999994 H446.4 Z" fill="#fafafa" stroke="#6e6c6a" stroke-width="1.2" stroke-linejoin="round"/><path d="M458.8,37.8 V44.0 H465.0" fill="none" stroke="#6e6c6a" stroke-width="1.1"/><circle cx="464.3" cy="57.6" r="6.6" fill="#fff" stroke="#2b88d8" stroke-width="1.3"/><path d="M464.3,53.4 V58 H467.6" fill="none" stroke="#484644" stroke-width="1.1"/><rect x="509.6" y="38.8" width="25" height="24.4" fill="#fdfdfd" stroke="#6e6c6a" stroke-width="1.1"/><rect x="509.6" y="38.8" width="25" height="2.4" fill="#6e6c6a"/><path d="M517.93,38.8V63.199999999999996M526.27,38.8V63.199999999999996M509.6,46.70H534.6M509.6,52.20H534.6M509.6,57.70H534.6" stroke="#6e6c6a" stroke-width="1.1" fill="none"/><g transform="translate(518.4,64.4) rotate(-41.3)"><path d="M0,0 L5.5,-2.6 H22.233035303073404 a2,2 0 0 1 2,2 V0.6000000000000001 a2,2 0 0 1 -2,2 H5.5 Z" fill="#eaf3fb" stroke="#2b88d8" stroke-width="1.2" stroke-linejoin="round"/><path d="M0,0 L2.6,-1.2 V1.2 Z" fill="#2b88d8"/><path d="M20.033035303073405,-2.6 V2.6" stroke="#2b88d8" stroke-width="1"/></g><path d="M557.5,37.8 H570.3 L576.5,44.0 V62.4 H557.5 Z" fill="#fafafa" stroke="#6e6c6a" stroke-width="1.2" stroke-linejoin="round"/><path d="M570.3,37.8 V44.0 H576.5" fill="none" stroke="#6e6c6a" stroke-width="1.1"/><circle cx="575.2" cy="58.4" r="7.6" fill="#f3f2f1"/><g fill="none" stroke="#3a9b50" stroke-width="1.4"><path d="M569.4,57.2 A6,6 0 0 1 580.6,55.2"/><path d="M581,59.8 A6,6 0 0 1 569.8,61.6"/><path d="M581.6,51.6 V55.8 H577.4"/><path d="M568.8,65.2 V61 H573"/></g><rect x="624.2" y="42" width="6.4" height="20.2" fill="#c8c6c4" stroke="#a19f9d" stroke-width="0.8"/><rect x="616.6" y="37.8" width="7" height="24.4" fill="#fdfdfd" stroke="#484644" stroke-width="1.2"/><rect x="608.6" y="48.2" width="7.4" height="14" fill="#7ab6e8" stroke="#2b88d8" stroke-width="1.2"/><path d="M628.3,51 V64.2 M621.7,57.6 H634.9" stroke="#2e8b57" stroke-width="1.5"/><rect x="644" y="39.8" width="26.4" height="20.8" fill="#fbfbfb" stroke="#6e6c6a" stroke-width="1.3"/><rect x="642.6" y="38.4" width="2.8" height="2.8" fill="#2b88d8"/><rect x="669.0" y="38.4" width="2.8" height="2.8" fill="#2b88d8"/><rect x="642.6" y="59.2" width="2.8" height="2.8" fill="#2b88d8"/><rect x="669.0" y="59.2" width="2.8" height="2.8" fill="#2b88d8"/><text x="657.2" y="56.3" font-family="Liberation Sans, sans-serif" font-size="16.5" fill="#2b88d8" text-anchor="middle">A</text><rect x="701.6" y="42.6" width="7.6" height="19.6" fill="#fafafa" stroke="#484644" stroke-width="1.2"/><rect x="693.6" y="38.6" width="8" height="23.6" fill="#fafafa" stroke="#484644" stroke-width="1.2"/><rect x="686.8" y="48.2" width="6.8" height="14" fill="#fafafa" stroke="#484644" stroke-width="1.2"/><g transform="translate(695.2,64.4) rotate(-42.0)"><path d="M0,0 L5.5,-2.6 H21.93407612589211 a2,2 0 0 1 2,2 V0.6000000000000001 a2,2 0 0 1 -2,2 H5.5 Z" fill="#eaf3fb" stroke="#2b88d8" stroke-width="1.2" stroke-linejoin="round"/><path d="M0,0 L2.6,-1.2 V1.2 Z" fill="#2b88d8"/><path d="M19.73407612589211,-2.6 V2.6" stroke="#2b88d8" stroke-width="1"/></g><rect x="749.3" y="37.8" width="17" height="24.5" fill="#fafafa" stroke="#6e6c6a" stroke-width="1.2"/><rect x="751.8" y="40.199999999999996" width="12" height="4.2" fill="#7ab6e8" stroke="#2b88d8" stroke-width="0.9"/><rect x="752.40" y="47.10" width="2.3" height="2.4" fill="#323130"/><rect x="756.75" y="47.10" width="2.3" height="2.4" fill="#323130"/><rect x="761.10" y="47.10" width="2.3" height="2.4" fill="#323130"/><rect x="752.40" y="52.30" width="2.3" height="2.4" fill="#323130"/><rect x="756.75" y="52.30" width="2.3" height="2.4" fill="#323130"/><rect x="761.10" y="52.30" width="2.3" height="2.4" fill="#323130"/><rect x="752.40" y="57.50" width="2.3" height="2.4" fill="#323130"/><rect x="756.75" y="57.50" width="2.3" height="2.4" fill="#323130"/><rect x="761.10" y="57.50" width="2.3" height="2.4" fill="#323130"/><rect x="793.8" y="37.8" width="17" height="24.5" fill="#fafafa" stroke="#6e6c6a" stroke-width="1.2"/><rect x="796.3" y="40.199999999999996" width="12" height="4.2" fill="#c8c6c4" stroke="#a19f9d" stroke-width="0.9"/><rect x="796.90" y="47.10" width="2.3" height="2.4" fill="#323130"/><rect x="801.25" y="47.10" width="2.3" height="2.4" fill="#323130"/><rect x="805.60" y="47.10" width="2.3" height="2.4" fill="#323130"/><rect x="796.90" y="52.30" width="2.3" height="2.4" fill="#323130"/><rect x="801.25" y="52.30" width="2.3" height="2.4" fill="#323130"/><rect x="805.60" y="52.30" width="2.3" height="2.4" fill="#323130"/><rect x="796.90" y="57.50" width="2.3" height="2.4" fill="#323130"/><rect x="801.25" y="57.50" width="2.3" height="2.4" fill="#323130"/><rect x="805.60" y="57.50" width="2.3" height="2.4" fill="#323130"/><path d="M795.6,35.6 H800.6 L798.4,41.4 H801.2 L791.2,53.2 L793.8,44.6 H790.6 Z" fill="#f0a030" stroke="#d9822b" stroke-width="0.7" stroke-linejoin="round"/><path d="M866.4,37.7 H855.7 V62.5 H874.5 V50.4 L866.4,37.7 Z" fill="#f7fafd" stroke="none"/><path d="M866.4,37.7 H855.7 V62.5 H874.5 V50.6" fill="none" stroke="#3a93dc" stroke-width="1.3"/><g transform="translate(870.7,44.8) rotate(-45)"><rect x="-9.7" y="-6.2" width="4.5" height="12.4" rx="1.3" fill="#f3f8fd" stroke="#3a93dc" stroke-width="1.1"/><rect x="-8.3" y="-4.5" width="1.7" height="9" rx="0.6" fill="none" stroke="#3a93dc" stroke-width="0.8"/><rect x="1.2" y="-4" width="3.7" height="8" fill="#fafafa" stroke="#3a93dc" stroke-width="1.1"/><rect x="4.9" y="-2.3" width="3.5" height="4.6" fill="#fafafa" stroke="#3a93dc" stroke-width="1.1"/><rect x="-1.3" y="-5.6" width="2.6" height="11.2" fill="#1a7ad0"/></g><g fill="none" stroke="#6a6866" stroke-width="1.4"><rect x="915.8" y="52.7" width="9.9" height="9.7" rx="2"/><path d="M920.7,52.7 V47.2 a2,2 0 0 1 2,-2 H928.2 a2,2 0 0 1 2,2 V62.4 M925.7,62.4 H932.6"/><path d="M925.3,45.2 V39.6 a2,2 0 0 1 2,-2 H932.5 a2,2 0 0 1 2,2 V48.1"/></g><path d="M934.4,64.3 V50.8 M929,56.2 L934.4,50.6 L939.9,56.2" fill="none" stroke="#3a8fd6" stroke-width="1.4"/></svg>
<svg style="left:0;top:0" width="1161" height="400"><path d="M847.1,170.7 H864.5" stroke="#605e5c" stroke-width="1.3"/><rect x="847.4" y="174.9" width="21.4" height="6.6" fill="#117865" stroke="#111" stroke-width="1" stroke-dasharray="1.2,0.9"/><rect x="847.4" y="185.2" width="21.4" height="6.6" fill="#117865" stroke="#111" stroke-width="1" stroke-dasharray="1.2,0.9"/><polyline points="856,202 858.2,199.9 860.4,202" fill="none" stroke="#8a8886" stroke-width="1"/><path d="M910.6,187.6 V178.6 H914.8 M914.8,186 V171.8 H921.8 V181.4 M921.8,176.2 H926.4 V178" fill="none" stroke="#323130" stroke-width="1.25"/><path d="M929.6,177 L920.6,186.2 Q918.8,190.6 913.2,190.8 Q917.2,189.2 917.6,184.6 L928,175.6 Z" fill="#f3f2f1" stroke="#323130" stroke-width="1.1" stroke-linejoin="round"/><circle cx="977.2" cy="179.4" r="8.8" fill="none" stroke="#323130" stroke-width="1.3"/><path d="M983.6,185.8 L989.6,191.4" stroke="#323130" stroke-width="2"/><path d="M969.6,180.6 L973,177.4 L976.4,179 L984.6,173.6" fill="none" stroke="#323130" stroke-width="1.1"/><path d="M971.8,182.6 V186 M974.8,181.6 V187.6 M977.8,181.6 V188 M980.8,180 V187.4 M983.6,178.4 V185" stroke="#323130" stroke-width="1"/><path d="M846,217.8 V234.1 H863" fill="none" stroke="#484644" stroke-width="1.2"/><path d="M846,221.5h2M846,225.5h2M846,229.5h2" stroke="#484644" stroke-width="1"/><rect x="849.40" y="219.60" width="8.00" height="3.00" fill="#78b5e8" stroke="#2b88d8" stroke-width="1"/><rect x="857.40" y="219.60" width="4.20" height="3.00" fill="#c8c6c4" stroke="#a19f9d" stroke-width="1"/><rect x="849.40" y="225.00" width="6.00" height="3.00" fill="#78b5e8" stroke="#2b88d8" stroke-width="1"/><rect x="849.40" y="230.00" width="10.00" height="3.00" fill="#fff" stroke="#484644" stroke-width="1"/><path d="M872,217.8 V234.1 H889" fill="none" stroke="#484644" stroke-width="1.2"/><rect x="874.00" y="222.00" width="3.40" height="12.00" fill="#78b5e8" stroke="#2b88d8" stroke-width="1"/><rect x="879.00" y="226.00" width="3.40" height="8.00" fill="#fff" stroke="#484644" stroke-width="1"/><rect x="884.00" y="220.00" width="3.40" height="14.00" fill="#c8c6c4" stroke="#a19f9d" stroke-width="1"/><path d="M897.6,217.8 V234.1 H914.6" fill="none" stroke="#484644" stroke-width="1.2"/><rect x="899.40" y="224.40" width="9.00" height="3.00" fill="#fff" stroke="#484644" stroke-width="1"/><rect x="899.40" y="229.40" width="12.00" height="3.00" fill="#78b5e8" stroke="#2b88d8" stroke-width="1"/><rect x="908.00" y="218.60" width="5.00" height="3.40" fill="#78b5e8" stroke="#2b88d8" stroke-width="1"/><path d="M923,217.8 V234.1 H940" fill="none" stroke="#484644" stroke-width="1.2"/><rect x="924.30" y="218.40" width="3.20" height="15.70" fill="#78b5e8" stroke="#2b88d8" stroke-width="1"/><rect x="929.60" y="225.00" width="2.70" height="9.10" fill="#fff" stroke="#484644" stroke-width="1"/><rect x="932.50" y="227.00" width="2.60" height="7.10" fill="#c8c6c4" stroke="#8a8886" stroke-width="1"/><rect x="935.90" y="222.30" width="3.00" height="11.80" fill="#fff" stroke="#484644" stroke-width="1"/><path d="M948.8,217.8 V234.1 H965.4" fill="none" stroke="#484644" stroke-width="1.2"/><rect x="950.20" y="219.70" width="12.40" height="3.90" fill="#78b5e8" stroke="#2b88d8" stroke-width="1"/><rect x="950.20" y="227.60" width="6.80" height="3.60" fill="#fff" stroke="#484644" stroke-width="1"/><rect x="957.00" y="227.60" width="5.60" height="3.60" fill="#c8c6c4" stroke="#8a8886" stroke-width="1"/><path d="M974.4,217.8 V234.1 H991.4" fill="none" stroke="#484644" stroke-width="1.2"/><rect x="977.00" y="219.70" width="4.20" height="10.30" fill="#78b5e8" stroke="#2b88d8" stroke-width="1"/><rect x="977.00" y="230.00" width="4.20" height="4.00" fill="#fff" stroke="#484644" stroke-width="1"/><rect x="984.70" y="219.70" width="4.10" height="4.80" fill="#c8c6c4" stroke="#8a8886" stroke-width="1"/><rect x="984.70" y="224.50" width="4.10" height="9.50" fill="#fff" stroke="#484644" stroke-width="1"/><path d="M846.4,243.2 V259.8 H863" fill="none" stroke="#484644" stroke-width="1.2"/><polyline points="846.8,258 850.6,253.4 856.4,246.6 861.8,251.4" fill="none" stroke="#2b88d8" stroke-width="1.2"/><polyline points="846.8,253.6 851.6,248.6 855,251.6 858.6,247.6 862,250" fill="none" stroke="#484644" stroke-width="1.1"/><rect x="867.2" y="239.2" width="25" height="24.7" fill="#d6d5d4"/><polygon points="884.5,244.1 888.6,251.3 888.8,259.4 880,259.4 880,251.6" fill="#bdbbb9"/><polyline points="881.3,249.6 884.5,244.1 888.6,251.6" fill="none" stroke="#7a7876" stroke-width="0.9"/><polygon points="877.5,244.7 871.8,253.3 875.8,256.2 881.3,249.6" fill="#fdfdfd"/><polyline points="871.8,253.3 877.5,244.7 881.3,249.8" fill="none" stroke="#252423" stroke-width="1.1" stroke-linejoin="round"/><polygon points="871.9,253.6 876.1,256.5 881.6,250.2 888,259.3 871.9,259.3" fill="#7ab8ea" stroke="#1a6fc0" stroke-width="1.1" stroke-linejoin="round"/><rect x="868.4" y="240.4" width="22.6" height="22.3" fill="none" stroke="#ff0000" stroke-width="2.6"/><path d="M897.8,243.2 V259.8 H914.8" fill="none" stroke="#484644" stroke-width="1.2"/><polygon points="898.6,247.8 904,253.3 909.6,247.1 914.4,251.3 914.4,256 909.6,252 904,258 898.6,252.4" fill="#78b5e8" stroke="#2b88d8" stroke-width="1" stroke-linejoin="round"/><path d="M923.2,243.2 V259.8 H940" fill="none" stroke="#484644" stroke-width="1.2"/><rect x="926.00" y="245.80" width="4.20" height="12.40" fill="#78b5e8" stroke="#2b88d8" stroke-width="1"/><rect x="926.00" y="254.60" width="4.20" height="4.60" fill="#fff" stroke="#484644" stroke-width="1"/><rect x="933.70" y="245.80" width="4.20" height="5.00" fill="#c8c6c4" stroke="#8a8886" stroke-width="1"/><rect x="933.70" y="250.80" width="4.20" height="8.40" fill="#fff" stroke="#484644" stroke-width="1"/><polyline points="924,256 928.4,252.4 932,254.6 939,249.4" fill="none" stroke="#484644" stroke-width="1.1"/><path d="M948.8,243.2 V259.8 H965.6" fill="none" stroke="#484644" stroke-width="1.2"/><rect x="951.00" y="251.30" width="4.00" height="7.60" fill="#78b5e8" stroke="#2b88d8" stroke-width="1"/><rect x="955.80" y="245.20" width="3.40" height="13.80" fill="#fff" stroke="#484644" stroke-width="1"/><rect x="960.00" y="250.00" width="3.20" height="9.00" fill="#c8c6c4" stroke="#8a8886" stroke-width="1"/><polyline points="949.6,257 954,252 958,254.4 965,247.4" fill="none" stroke="#484644" stroke-width="1.1"/><path d="M975.8,245.4 L980,247.6 Q982.6,249.6 985,247.6 L989.4,245.2 V248.8 L985,251 Q982.6,252.6 980,251 L975.8,248.8 Z" fill="#b3b0ad" stroke="#8a8886" stroke-width="0.6"/><rect x="976" y="253.4" width="3.4" height="3.6" fill="#f0a030"/><rect x="981.2" y="250.6" width="3" height="3" fill="#f0a030"/><rect x="986" y="253.6" width="3.4" height="3.6" fill="#f0a030"/><path d="M975.8,249.6 Q979,249.8 980.4,253 Q982.6,256.6 984.8,253 Q986.4,249.8 989.4,249.6 V253.2 Q987.6,253.6 986.4,256 Q982.6,260.6 978.8,256 Q977.6,253.6 975.8,253.2 Z" fill="#3b8ede" stroke="#2b88d8" stroke-width="0.6"/><path d="M975.6,244.2 V259.8 H990" fill="none" stroke="#484644" stroke-width="1.2"/><path d="M846.2,269.2 V285.4 H863.4" fill="none" stroke="#484644" stroke-width="1.2"/><rect x="848.30" y="273.60" width="2.70" height="11.80" fill="#fff" stroke="#484644" stroke-width="1"/><rect x="851.30" y="277.80" width="2.60" height="7.60" fill="#c8c6c4" stroke="#8a8886" stroke-width="1"/><rect x="854.00" y="280.50" width="4.00" height="4.90" fill="#fff" stroke="#484644" stroke-width="1"/><rect x="855.80" y="270.20" width="2.30" height="7.60" fill="#78b5e8" stroke="#2b88d8" stroke-width="1"/><rect x="858.70" y="270.20" width="2.70" height="15.20" fill="#c8c6c4" stroke="#8a8886" stroke-width="1"/><rect x="872.40" y="270.30" width="16.00" height="3.90" fill="#78b5e8" stroke="#2b88d8" stroke-width="1"/><rect x="875.20" y="274.80" width="10.80" height="4.20" fill="#78b5e8" stroke="#2b88d8" stroke-width="1"/><rect x="878.00" y="279.60" width="5.00" height="4.40" fill="#78b5e8" stroke="#2b88d8" stroke-width="1"/><path d="M897.6,269.2 V285.4 H914.6" fill="none" stroke="#484644" stroke-width="1.2"/><rect x="910" y="270.2" width="2.5" height="2.5" fill="#252423"/><rect x="901" y="272.9" width="2.5" height="2.5" fill="#9cc8ee"/><rect x="905.2" y="276.1" width="2.5" height="2.5" fill="#5fa8e6"/><rect x="900.7" y="280.2" width="2.5" height="2.5" fill="#252423"/><rect x="910" y="279.5" width="2.5" height="2.5" fill="#86bdeb"/><circle cx="931.2" cy="277.4" r="8" fill="#fdfdfd" stroke="#484644" stroke-width="1.2"/><path d="M931.2,277.4 V269.4 A8,8 0 0 1 935.4,284.2 Z" fill="#78b5e8" stroke="#2b88d8" stroke-width="1" stroke-linejoin="round"/><circle cx="956.9" cy="277.4" r="5.9" fill="none" stroke="#78b5e8" stroke-width="4.2"/><circle cx="956.9" cy="277.4" r="8" fill="none" stroke="#2b88d8" stroke-width="1"/><circle cx="956.9" cy="277.4" r="3.8" fill="none" stroke="#2b88d8" stroke-width="1"/><path d="M949.2,277.6 A7.8,7.8 0 0 1 955.6,269.7 L956.2,273.6 A3.9,3.9 0 0 0 953.1,277.6 Z" fill="#fdfdfd" stroke="#2b88d8" stroke-width="0.9"/><rect x="974.8" y="269.6" width="7.6" height="15.8" fill="#78b5e8" stroke="#2b88d8" stroke-width="1.1"/><path d="M974.8,277.6 H982.4" stroke="#2b88d8" stroke-width="1.1"/><rect x="982.4" y="269.6" width="8.2" height="15.8" fill="#fdfdfd" stroke="#484644" stroke-width="1.1"/><path d="M982.4,274.6 H990.6 M982.4,280 H990.6 M986.4,274.6 V285.4" stroke="#484644" stroke-width="1"/><circle cx="854.5" cy="301.8" r="5.6" fill="#f4f4f4" stroke="#484644" stroke-width="1.1"/><path d="M851.6,298.6 Q853.6,297.2 855.2,298.4 Q855.8,300.4 853.8,301.2 Q852,302.8 851,301 Z M856.2,301.6 Q858.6,300.6 859.2,302.6 Q858.4,305.4 856.2,305.6 Q855,303.6 856.2,301.6 Z M852.6,304 l1.6,0.4 l-0.6,1.8 Z" fill="#2e9b47"/><path d="M857.6,295 A8,8 0 0 1 855.4,309.4" fill="none" stroke="#484644" stroke-width="1.1"/><path d="M854.6,308 V310.6 M849,311 H860.6" stroke="#484644" stroke-width="1.2"/><path d="M872.4,296 L877,296.4 L879.6,299 L882.6,297.6 L888.2,296 V304.6 L884.6,309 L881,310 L879,307.4 L876.4,307.8 L873.2,303.6 Z" fill="#c8c6c4" stroke="#484644" stroke-width="1" stroke-linejoin="round"/><path d="M873.4,296.4 L877,296.4 L879.6,299 L880.4,303.4 L875.4,303.8 L873,301.2 Z" fill="#78b5e8" stroke="#2b88d8" stroke-width="0.8"/><path d="M888,301.4 L883,302.6 L881,306.2 L881.2,309.8 L884.6,308.8 L888,304.6 Z" fill="#78b5e8" stroke="#2b88d8" stroke-width="0.8"/><defs><linearGradient id="azg" x1="0" y1="0" x2="1" y2="1"><stop offset="0" stop-color="#50b8f0"/><stop offset="1" stop-color="#1668c0"/></linearGradient></defs><path d="M908.4,294.4 L913,311.6 L907.6,306.2 L899,309.4 Z" fill="url(#azg)"/><path d="M922.8,306 A8.4,8.4 0 0 1 939.6,306 H935.6 A4.4,4.4 0 0 0 926.8,306 Z" fill="#78b5e8" stroke="#2b88d8" stroke-width="1"/><path d="M922.8,306 A8.4,8.4 0 0 1 927.4,298.6 L929.4,302.2 A4.4,4.4 0 0 0 926.8,306 Z" fill="#fdfdfd" stroke="#484644" stroke-width="1"/><path d="M930.4,306.4 L934.6,301.6" stroke="#484644" stroke-width="1.4"/><rect x="948.4" y="297" width="16.8" height="12.2" fill="#fdfdfd" stroke="#484644" stroke-width="1.2"/><rect x="950.6" y="306" width="12.4" height="1.6" fill="#c8c6c4"/><text x="956.8" y="304.8" font-family="Liberation Sans, sans-serif" font-size="7.6" fill="#2b88d8" text-anchor="middle" letter-spacing="-0.3">123</text><rect x="974.6" y="295.2" width="16.2" height="15.6" fill="#fdfdfd" stroke="#484644" stroke-width="1.2"/><path d="M977.8,297.4 V308.8" stroke="#484644" stroke-width="0.9"/><path d="M979.4,299.2 H988.2 M979.4,304 H988.2" stroke="#2b88d8" stroke-width="1.7"/><path d="M979.4,301.6 H985 M979.4,306.6 H985" stroke="#a19f9d" stroke-width="1"/><rect x="846.4" y="321.4" width="16.2" height="13.2" fill="#fdfdfd" stroke="#484644" stroke-width="1.2"/><polygon points="848.8,329 851.4,324.2 854,329" fill="#3aa655"/><polygon points="855.8,324.2 861,324.2 858.4,329" fill="#e03a3e"/><path d="M848.4,331.6 H860.6" stroke="#a19f9d" stroke-width="1"/><rect x="872.2" y="320.6" width="15.8" height="16" fill="#fdfdfd" stroke="#484644" stroke-width="1.2"/><path d="M872.2,323.6 H888" stroke="#484644" stroke-width="1"/><rect x="875" y="326.6" width="2.4" height="2.4" fill="none" stroke="#484644" stroke-width="0.8"/><rect x="875" y="331.2" width="2.4" height="2.4" fill="none" stroke="#484644" stroke-width="0.8"/><path d="M880.2,328.6 H889.6 L886.2,332.6 V337.2 H883.6 V332.6 Z" fill="#fdfdfd" stroke="#484644" stroke-width="1.1" stroke-linejoin="round"/><rect x="897.8" y="320.6" width="15.8" height="16" fill="#fdfdfd" stroke="#5a5856" stroke-width="1.1"/><rect x="897.8" y="320.6" width="15.8" height="1.9" fill="#5a5856"/><path d="M897.8,326.4 H913.6 M897.8,329.8 H913.6 M897.8,333.2 H913.6 M903,320.6 V336.6 M908.4,320.6 V336.6" stroke="#6a6866" stroke-width="0.85"/><rect x="923.4" y="320.6" width="15.8" height="16" fill="#fdfdfd"/><rect x="933.8" y="323" width="5.4" height="13.6" fill="#78b5e8"/><rect x="923.4" y="329.8" width="15.8" height="6.8" fill="#78b5e8"/><rect x="923.4" y="320.6" width="15.8" height="16" fill="none" stroke="#484644" stroke-width="1.2"/><rect x="923.4" y="320.6" width="15.8" height="2.2" fill="#484644"/><path d="M923.4,326.4 H933.8 M928.6,322 V329.8" stroke="#484644" stroke-width="1"/><path d="M933.8,326.4 H939.2 M923.4,329.8 H939.2 M923.4,333.2 H939.2 M928.6,329.8 V336.6 M933.8,322.8 V336.6" stroke="#2b88d8" stroke-width="0.9"/><text x="955.5" y="334" font-family="Liberation Sans, sans-serif" font-size="14" font-weight="700" fill="#1b7fd0" text-anchor="middle">R</text><text x="982.4" y="331.2" font-family="Liberation Sans, sans-serif" font-size="13.4" font-weight="700" fill="#1b7fd0" text-anchor="middle" letter-spacing="-0.4">Py</text><path d="M846.4,346 V361.6" stroke="#484644" stroke-width="1.2"/><path d="M846.4,362 H863" stroke="#484644" stroke-width="1.7"/><path d="M847,349.2 H858" stroke="#2b88d8" stroke-width="1.2"/><circle cx="860" cy="349.2" r="1.8" fill="#78b5e8" stroke="#2b88d8" stroke-width="1"/><path d="M847,353.6 H855 M847,357.2 H851.4" stroke="#8a8886" stroke-width="1.1"/><circle cx="855.8" cy="353.6" r="1" fill="#484644"/><circle cx="852" cy="357.2" r="1" fill="#484644"/><path d="M878,353.6 H880.4 M880.4,348.2 V359 M880.4,348.2 H882.4 M880.4,353.6 H882.4 M880.4,359 H882.4" stroke="#484644" stroke-width="1" fill="none"/><rect x="872.20" y="351.60" width="5.60" height="4.00" fill="#78b5e8" stroke="#2b88d8" stroke-width="1"/><rect x="882.60" y="346.60" width="5.60" height="3.40" fill="#78b5e8" stroke="#2b88d8" stroke-width="1"/><rect x="882.60" y="352.00" width="5.60" height="3.40" fill="#78b5e8" stroke="#2b88d8" stroke-width="1"/><rect x="882.60" y="357.40" width="5.60" height="3.40" fill="#78b5e8" stroke="#2b88d8" stroke-width="1"/><path d="M898,347.2 H913.8 V357.2 H904.6 L900.6,361 V357.2 H898 Z" fill="#f8f8f8" stroke="#2b88d8" stroke-width="1.3" stroke-linejoin="round"/><path d="M925,345.8 H933.6 L937.8,350 V362.4 H925 Z" fill="#fdfdfd" stroke="#484644" stroke-width="1.2" stroke-linejoin="round"/><path d="M933.4,346 V350.2 H937.6" fill="none" stroke="#484644" stroke-width="1"/><circle cx="925.8" cy="352.2" r="1.5" fill="#78b5e8" stroke="#2b88d8" stroke-width="0.8"/><path d="M929,353.2 H935 M928.4,356.6 H933" stroke="#2b88d8" stroke-width="1.1"/><path d="M951.6,346.4 H962.2 V350.6 Q962.2,355.4 956.9,355.8 Q951.6,355.4 951.6,350.6 Z" fill="#fdfdfd" stroke="#484644" stroke-width="1.2"/><rect x="951.6" y="346.2" width="10.6" height="2.4" fill="#78b5e8" stroke="#2b88d8" stroke-width="0.8"/><path d="M951.6,348.6 Q948.4,348.4 949,351 Q949.6,353.2 952.6,353.4 M962.2,348.6 Q965.4,348.4 964.8,351 Q964.2,353.2 961.2,353.4" fill="none" stroke="#484644" stroke-width="1.1"/><path d="M955.6,355.8 L954.8,359.4 M958.2,355.8 L959,359.4" stroke="#484644" stroke-width="1"/><ellipse cx="956.9" cy="360.6" rx="4.8" ry="1.5" fill="#78b5e8" stroke="#2b88d8" stroke-width="1"/><path d="M976,345.8 H984.4 L988.6,350 V362.6 H976 Z" fill="#fdfdfd" stroke="#484644" stroke-width="1.4" stroke-linejoin="round"/><path d="M984.2,346 V350.2 H988.4" fill="none" stroke="#484644" stroke-width="1"/><path d="M979,356.2 V360.4 M982.2,357.6 V360.4 M985.4,353.4 V360.4" stroke="#252423" stroke-width="1.7"/><rect x="846.4" y="373.4" width="16.2" height="12.2" fill="#fdfdfd" stroke="#484644" stroke-width="1.1"/><path d="M846.4,385.8 H862.6" stroke="#8a8886" stroke-width="1.6"/><text x="856" y="382.6" font-family="Liberation Sans, sans-serif" font-size="7.6" fill="#2b88d8" text-anchor="middle" letter-spacing="-0.3">123</text><path d="M849.6,370.8 H853.2 L851.4,375 H853.6 L846.4,382.6 L848.2,376.8 H845.8 Z" fill="#f0a030" stroke="#e07d10" stroke-width="0.5" stroke-linejoin="round"/><rect x="872.6" y="371.6" width="15.4" height="15.8" fill="#9cc8ee" stroke="#1f6fbf" stroke-width="1.3"/><path d="M880,372 L882.6,376 L879.6,380 L882,383 L880.6,387" fill="none" stroke="#fdfdfd" stroke-width="2.2"/><path d="M872.6,381 H877 V387" fill="none" stroke="#1f6fbf" stroke-width="1.2"/><path d="M872,371 H876 V376 L874,378.6 L872,376 Z" fill="#e8750c"/><circle cx="886.2" cy="384.9" r="2.3" fill="#e8750c"/><circle cx="888" cy="380.4" r="1.1" fill="#e8750c"/><g fill="none" stroke="#a03fb8" stroke-width="1.3" stroke-linejoin="round"><path d="M905.9,371.8 L914.2,379.4 L905.9,387 L897.6,379.4 Z"/><path d="M901.8,375.6 L910,383.2 M910,375.6 L901.8,383.2"/></g><g fill="none" stroke="#2b88d8" stroke-width="1.2" stroke-linejoin="round"><path d="M923.4,372.6 H932.6 L939.4,379.4 L932.6,386.2 H923.4 L930.2,379.4 Z"/><path d="M927.6,386 L934.4,379.2 M930.4,386 L936.8,379.6 M926.6,372.8 L933.2,379.4"/></g><rect x="950.25" y="377.4" width="1.3" height="1.3" fill="#605e5c"/><rect x="955.85" y="377.4" width="1.3" height="1.3" fill="#605e5c"/><rect x="961.35" y="377.4" width="1.3" height="1.3" fill="#605e5c"/></svg>
<svg style="left:0;top:0" width="1161" height="400"><path d="M8.5,125.8 V137.6 H21" fill="none" stroke="#72706e" stroke-width="1.1"/><rect x="9.9" y="127.8" width="1.9" height="9.0" fill="#dddbd9" stroke="#72706e" stroke-width="0.9"/><rect x="13.9" y="130.2" width="1.9" height="6.6" fill="#dddbd9" stroke="#72706e" stroke-width="0.9"/><rect x="17.9" y="126.2" width="1.9" height="10.6" fill="#dddbd9" stroke="#72706e" stroke-width="0.9"/><rect x="7.6" y="161.6" width="14.2" height="12.6" fill="#fbfbfb" stroke="#72706e" stroke-width="1"/><rect x="7.6" y="161.6" width="14.2" height="1.4" fill="#72706e"/><path d="M7.6,166.8 H21.8 M7.6,170.4 H21.8 M12.3,161.6 V174.2 M17.1,161.6 V174.2" stroke="#72706e" stroke-width="0.85"/><g fill="#f8f8f8" stroke="#7a7876" stroke-width="1"><rect x="7" y="196.6" width="6" height="8"/><rect x="15.6" y="192.4" width="7.2" height="6.4"/><rect x="15.6" y="206.2" width="7.2" height="6.4"/></g><path d="M7,199 H13 M15.6,194.8 H22.8 M15.6,208.6 H22.8 M13,199.6 H15.6 M10,204.6 V209.6 H15.6" fill="none" stroke="#7a7876" stroke-width="0.9"/><path d="M827.6,152.6 V162 L822,158.6 H818.4 V156 H822 Z" fill="none" stroke="#323130" stroke-width="1.2" stroke-linejoin="round"/><path d="M350.4,350.7 H364.8 L359.3,357.3 V362.6 H355.9 V357.3 Z" fill="none" stroke="#7a7876" stroke-width="1.1" stroke-linejoin="round"/><path d="M382.6,352.3 H376.4 V362.2 H388.5 V357.6 M376.4,358.8 H382.4 V362.2 M383.6,357.2 L388.4,352.4 M384.8,352.3 H388.5 V356" fill="none" stroke="#7a7876" stroke-width="1.1"/><circle cx="401.9" cy="356.7" r="1.1" fill="#484644"/><circle cx="407.5" cy="356.7" r="1.1" fill="#484644"/><circle cx="413.1" cy="356.7" r="1.1" fill="#484644"/></svg>
<svg style="left:0;top:0" width="1161" height="624"><g filter="drop-shadow(0 0.6px 1.4px rgba(0,0,0,0.22))"><path d="M850.8,203 H909.3 a2,2 0 0 1 2,2 V228.4 a2,2 0 0 1 -2,2 H885 L880,236 L875,230.4 H850.8 a2,2 0 0 1 -2,-2 V205 a2,2 0 0 1 2,-2 Z" fill="#fff"/></g></svg>
<span class="t" style="left:855.75px;top:212.25px;font-size:10.8px;color:#3b3a39;transform:scaleX(0.9787);transform-origin:0 0;">Area chart</span>
</div>
</body></html>
